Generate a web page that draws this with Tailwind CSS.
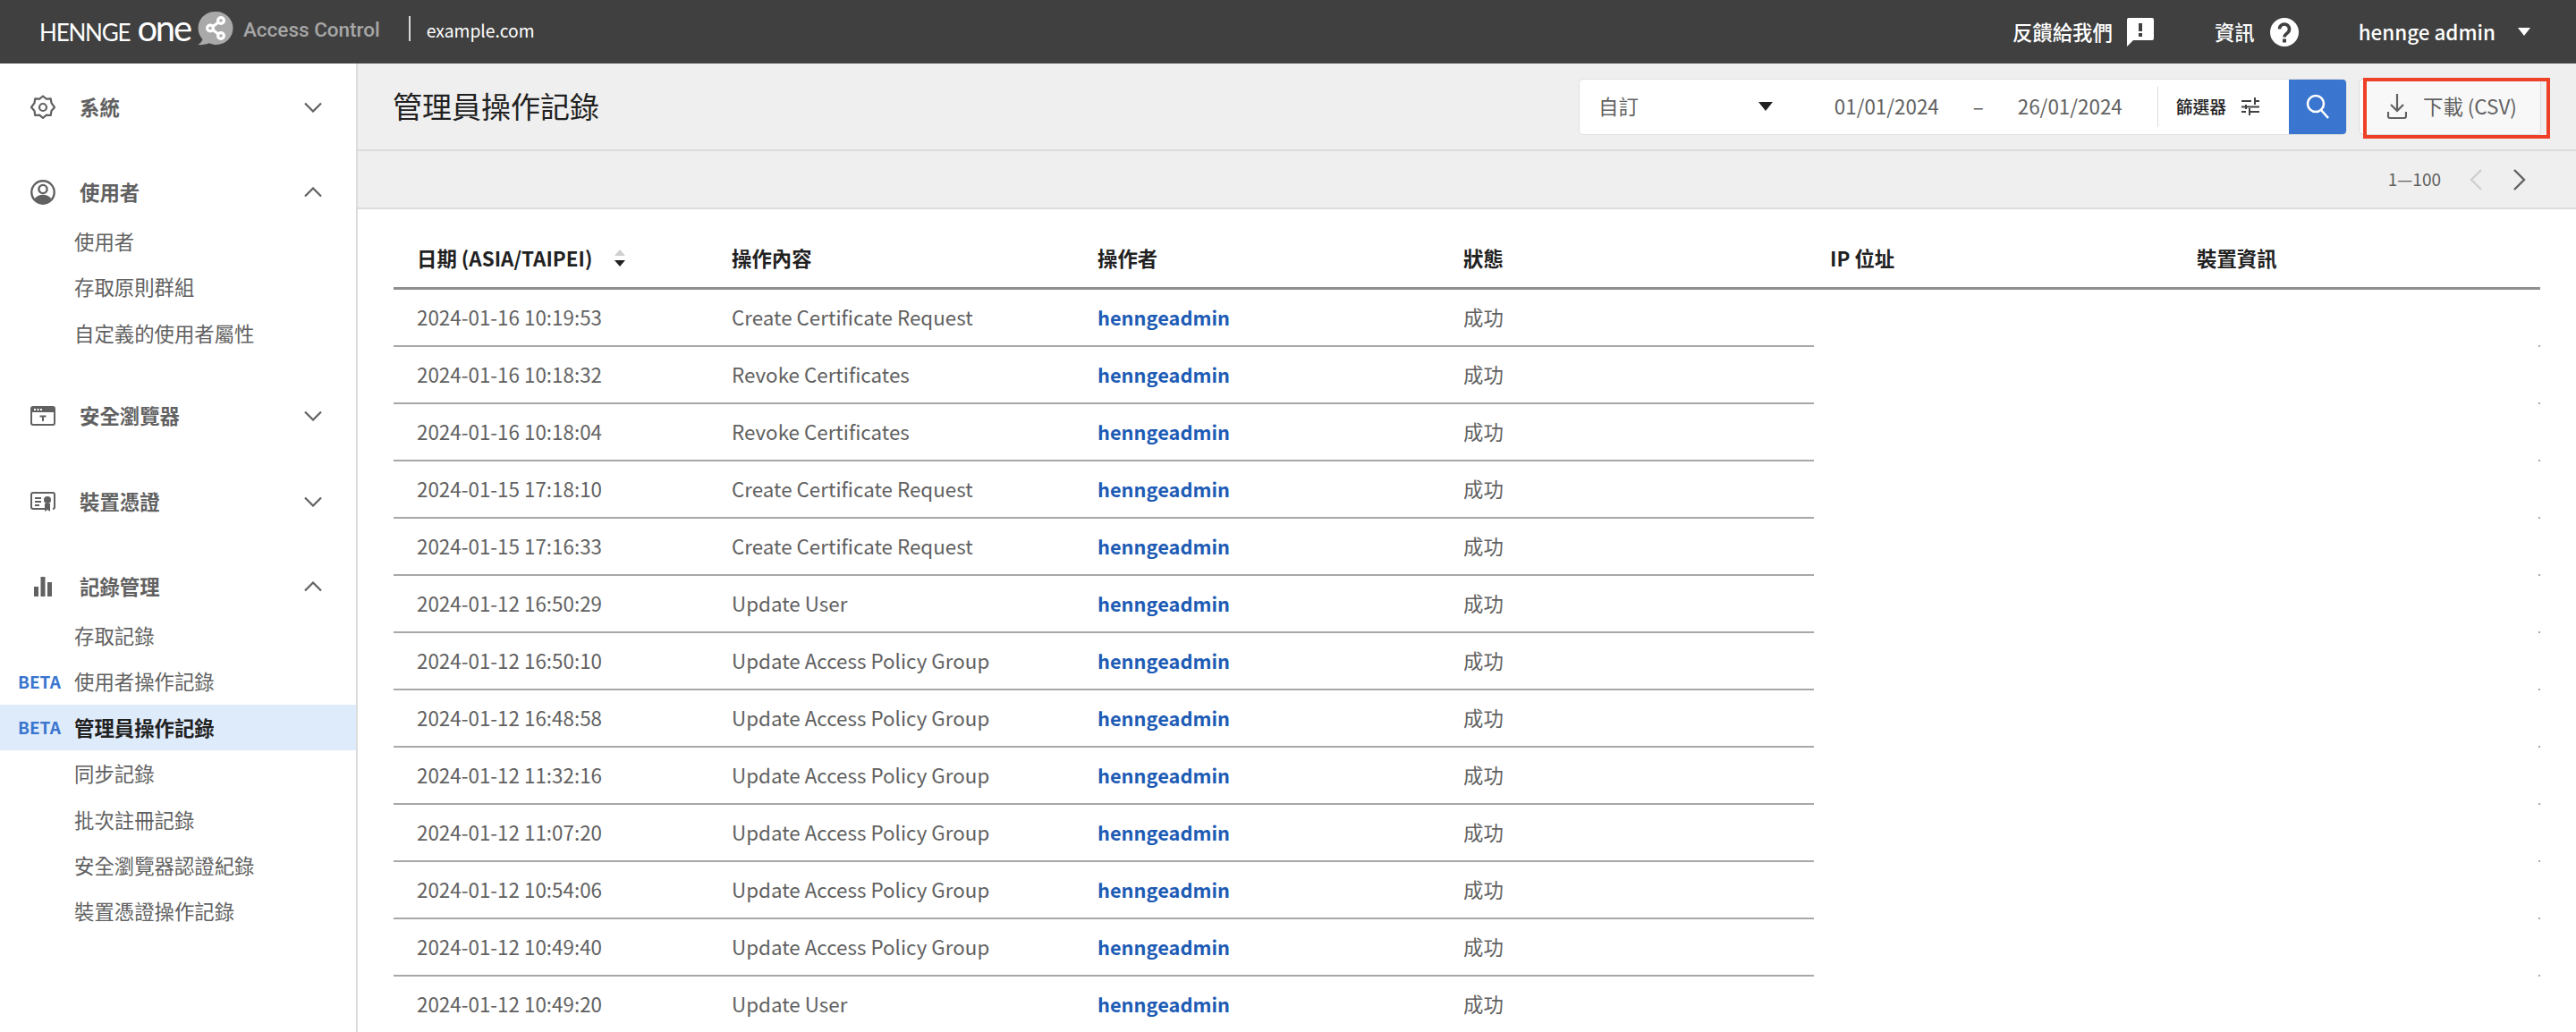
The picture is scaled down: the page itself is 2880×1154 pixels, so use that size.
<!DOCTYPE html>
<html lang="zh-Hant">
<head>
<meta charset="utf-8">
<title>管理員操作記錄</title>
<script src="https://cdn.jsdelivr.net/npm/@tailwindcss/browser@4"></script>
</head>
<body class="m-0 h-[1154px] w-[2880px] overflow-hidden bg-white font-['Noto_Sans_CJK_TC','Noto_Sans',sans-serif] text-[22.4px] text-[#616161]">
<header class="flex h-[71px] items-center bg-[#404040] pl-[44px] pr-[51px] text-white">
  <span class="mt-[-10px] flex items-baseline font-['Lato',sans-serif] leading-none"><span class="text-[26px] tracking-[-1.200px]">HENNGE</span><span class="ml-[8px] text-[40px] tracking-[-2.200px]">one</span></span>
  <svg class="ml-[8px] mt-[-7px] h-[40px] w-[40px]" viewBox="0 0 40 40"><path fill="#a9a9a9" d="M21 1a18.500 18.500 0 0 1 0 37c-3 0-5.500-.7-8-1.800C10 37.500 5 38.500 0 38c2.500-1.200 4.500-3 5.500-6A18.500 18.500 0 0 1 21 1Z"/><g fill="none" stroke="#fff" stroke-width="3.200"><circle cx="26" cy="11" r="3.400"/><circle cx="14" cy="19.500" r="3.400"/><circle cx="26" cy="28" r="3.400"/><path d="M17 17.500l6-4.300M17 21.500l6 4.500"/></g></svg>
  <span class="ml-[11px] mt-[-3px] font-['Roboto',sans-serif] text-[22.500px] font-medium text-[#a6a6a6]">Access Control</span>
  <span class="ml-[32px] mt-[-7px] h-[28px] w-[2px] bg-[#d9d9d9]"></span>
  <span class="ml-[18px] mt-[-3px] text-[19.300px]">example.com</span>
  <div class="ml-auto flex items-center font-medium">
    <span>反饋給我們</span>
    <svg class="ml-[16px] h-[34px] w-[30px]" viewBox="0 0 30 34"><path fill="#fff" fill-rule="evenodd" d="M2 1h26a2 2 0 0 1 2 2v21a2 2 0 0 1-2 2H7l-7 7V3a2 2 0 0 1 2-2Zm11 6v9h4V7Zm0 11v4h4v-4Z"/></svg>
    <span class="ml-[68px]">資訊</span>
    <svg class="ml-[17px] h-[32px] w-[32px]" viewBox="0 0 32 32"><circle cx="16" cy="16" r="16" fill="#fff"/><path fill="none" stroke="#404040" stroke-width="3.600" d="M10.500 12.500a5.500 5.500 0 1 1 8.800 4.400c-2 1.500-3.300 2.500-3.300 4.600"/><rect x="14" y="23.500" width="4" height="4" fill="#404040"/></svg>
    <span class="ml-[67px]">hennge admin</span>
    <svg class="ml-[25px] h-[9px] w-[14px]" viewBox="0 0 14 9"><path fill="#fff" d="M0 0h14L7 9Z"/></svg>
  </div>
</header>
<div class="flex h-[1083px]">
  <nav class="w-[400px] shrink-0 border-r-2 border-[#dcdcdc] pt-[20px]">
    <div class="flex h-[58px] items-center pl-[34px] pr-[38px] font-bold">
      <svg class="h-[28px] w-[28px]" viewBox="0 0 28 28" fill="none" stroke="#616161" stroke-width="2.200" stroke-linejoin="round"><path d="M14 1.500l3.800 3.200 4.900-.4.800 4.900L27 14l-3.500 3.900-.8 5.100-4.900-.4L14 26l-3.800-3.400-4.900.4-.8-5.100L1 14l3.500-4.800.8-4.900 4.900.4Z"/><circle cx="14" cy="14" r="4"/></svg>
      <span class="ml-[27px]">系統</span>
      <svg class="ml-auto h-[12px] w-[20px]" viewBox="0 0 20 12" fill="none" stroke="#616161" stroke-width="2.200"><path d="M1 1.500l9 9 9-9"/></svg>
    </div>
    <div class="mt-[37px] flex h-[58px] items-center pl-[34px] pr-[38px] font-bold">
      <svg class="h-[28px] w-[28px]" viewBox="0 0 28 28"><circle cx="14" cy="14" r="12.700" fill="none" stroke="#616161" stroke-width="2.400"/><circle cx="14" cy="10.500" r="4.600" fill="none" stroke="#616161" stroke-width="2.400"/><path fill="#616161" d="M4.500 21.500c2-3.300 5.500-4.800 9.500-4.800s7.500 1.500 9.500 4.800A12 12 0 0 1 14 26.500a12 12 0 0 1-9.500-5Z"/></svg>
      <span class="ml-[27px]">使用者</span>
      <svg class="ml-auto h-[12px] w-[20px]" viewBox="0 0 20 12" fill="none" stroke="#616161" stroke-width="2.200"><path d="M1 10.500l9-9 9 9"/></svg>
    </div>
    <ul>
      <li class="flex h-[51.400px] items-center pl-[83px]">使用者</li>
      <li class="flex h-[51.400px] items-center pl-[83px]">存取原則群組</li>
      <li class="flex h-[51.400px] items-center pl-[83px]">自定義的使用者屬性</li>
    </ul>
    <div class="mt-[38px] flex h-[58px] items-center pl-[34px] pr-[38px] font-bold">
      <svg class="h-[22px] w-[28px]" viewBox="0 0 28 22"><rect x="1" y="1" width="26" height="20" rx="2" fill="none" stroke="#616161" stroke-width="2"/><rect x="1" y="1" width="26" height="6" fill="#616161"/><path fill="#fff" d="M4 3h2v2H4zM7.500 3h2v2h-2zM11 3h2v2h-2z"/><path fill="#616161" d="M10.500 10.500h7v2h-2.500v4.500h-2v-4.500h-2.500z"/></svg>
      <span class="ml-[27px]">安全瀏覽器</span>
      <svg class="ml-auto h-[12px] w-[20px]" viewBox="0 0 20 12" fill="none" stroke="#616161" stroke-width="2.200"><path d="M1 1.500l9 9 9-9"/></svg>
    </div>
    <div class="mt-[38px] flex h-[58px] items-center pl-[34px] pr-[38px] font-bold">
      <svg class="h-[22px] w-[28px]" viewBox="0 0 28 22"><path fill="none" stroke="#616161" stroke-width="2" d="M16 19H3a2 2 0 0 1-2-2V3a2 2 0 0 1 2-2h22a2 2 0 0 1 2 2v14a2 2 0 0 1-2 2"/><path fill="#616161" d="M5 6h7v2H5zM5 10h7v2H5zM5 14h5v2H5z"/><circle cx="19" cy="9" r="4" fill="#616161"/><path fill="#616161" d="M16 13h6v9l-3-2-3 2Z"/></svg>
      <span class="ml-[27px]">裝置憑證</span>
      <svg class="ml-auto h-[12px] w-[20px]" viewBox="0 0 20 12" fill="none" stroke="#616161" stroke-width="2.200"><path d="M1 1.500l9 9 9-9"/></svg>
    </div>
    <div class="mt-[37px] flex h-[58px] items-center pl-[34px] pr-[38px] font-bold">
      <svg class="h-[22px] w-[28px]" viewBox="0 0 28 22"><path fill="#616161" d="M4 11h5v11H4zM11.500 0h5v22h-5zM19 6h5v16h-5z"/></svg>
      <span class="ml-[27px]">記錄管理</span>
      <svg class="ml-auto h-[12px] w-[20px]" viewBox="0 0 20 12" fill="none" stroke="#616161" stroke-width="2.200"><path d="M1 10.500l9-9 9 9"/></svg>
    </div>
    <ul>
      <li class="flex h-[51.400px] items-center pl-[83px]">存取記錄</li>
      <li class="flex h-[51.400px] items-center"><span class="w-[83px] pl-[20px] text-[19px] font-bold text-[#3a75cf]">BETA</span>使用者操作記錄</li>
      <li class="flex h-[51.400px] items-center bg-[#deebfb] font-bold text-[#212121]"><span class="w-[83px] pl-[20px] text-[19px] font-bold text-[#3a75cf]">BETA</span>管理員操作記錄</li>
      <li class="flex h-[51.400px] items-center pl-[83px]">同步記錄</li>
      <li class="flex h-[51.400px] items-center pl-[83px]">批次註冊記錄</li>
      <li class="flex h-[51.400px] items-center pl-[83px]">安全瀏覽器認證紀錄</li>
      <li class="flex h-[51.400px] items-center pl-[83px]">裝置憑證操作記錄</li>
    </ul>
  </nav>
  <main class="min-w-0 flex-1">
    <div class="relative flex h-[98px] items-center border-b-2 border-[#dcdcdc] bg-[#efefef] pl-[39px] pr-[39px]">
      <h1 class="text-[33px] font-normal text-[#212121]">管理員操作記錄</h1>
      <div class="ml-auto flex h-[63px] w-[859px] items-center overflow-hidden rounded-[5px] border border-[#e0e0e0] bg-white">
        <span class="ml-[21px]">自訂</span>
        <svg class="ml-[134px] h-[10px] w-[16px]" viewBox="0 0 16 10"><path fill="#212121" d="M0 0h16L8 10Z"/></svg>
        <span class="ml-[69px]">01/01/2024</span>
        <span class="ml-[38px]">–</span>
        <span class="ml-[38px]">26/01/2024</span>
        <span class="ml-[39px] h-[45px] w-[1px] bg-[#dcdcdc]"></span>
        <span class="ml-[20px] text-[18.800px] font-medium text-[#212121]">篩選器</span>
        <svg class="ml-[17px] h-[20px] w-[20px]" viewBox="0 0 20 20"><path fill="#424242" d="M0 3h11v2H0zM14 0h2v3h4v2h-4v3h-2zM0 15h5v2H0zM8 12h2v3h10v2H10v3H8zM4 8h2v1.500h14v2H6V13H4v-1.500H0v-2h4z"/></svg>
        <div class="ml-auto flex h-full w-[64px] items-center justify-center bg-[#3a75cf]">
          <svg class="h-[30px] w-[28px]" viewBox="0 0 28 30" fill="none" stroke="#fff" stroke-width="2.600"><circle cx="12" cy="12" r="9"/><path d="M18 19l8 9"/></svg>
        </div>
      </div>
      <button class="ml-[13px] flex h-[63px] w-[204px] items-center rounded-[5px] border border-[#dcdcdc] bg-[#f8f8f8] pl-[31px] text-[#616161]">
        <svg class="h-[30px] w-[22px]" viewBox="0 0 22 30" fill="none" stroke="#616161" stroke-width="2.200"><path d="M11 1v19M4 13l7 7 7-7M1 21v5a2 2 0 0 0 2 2h16a2 2 0 0 0 2-2v-5"/></svg>
        <span class="ml-[18px]">下載 (CSV)</span>
      </button>
      <span class="absolute left-[2242px] top-[16px] h-[68px] w-[209px] border-[4px] border-[#ee4027]"></span>
    </div>
    <div class="flex h-[65px] items-center justify-end border-b-2 border-[#dcdcdc] bg-[#efefef] pr-[56px]">
      <span class="text-[19px]">1—100</span>
      <svg class="ml-[32px] h-[24px] w-[14px]" viewBox="0 0 14 24" fill="none" stroke="#cfcfcf" stroke-width="2.400"><path d="M13 1L2 12l11 11"/></svg>
      <svg class="ml-[35px] h-[24px] w-[14px]" viewBox="0 0 14 24" fill="none" stroke="#616161" stroke-width="2.400"><path d="M1 1l11 11L1 23"/></svg>
    </div>
    <div class="px-[40px]">
      <div class="grid h-[90px] grid-cols-[352px_409px_409px_410px_410px_384px] items-center border-b-[3px] border-[#8f8f8f] pl-[26px] pt-[23px] font-bold text-[#212121]">
        <div class="flex items-center">日期 (ASIA/TAIPEI)
          <svg class="ml-[25px] h-[20px] w-[12px]" viewBox="0 0 12 20"><path fill="#cfcfcf" d="M6 0l6 7H0Z"/><path fill="#212121" d="M0 12h12l-6 7Z"/></svg>
        </div>
        <div>操作內容</div><div>操作者</div><div>狀態</div><div>IP 位址</div><div>裝置資訊</div>
      </div>
      <div class="grid h-[64px] grid-cols-[351px_409px_409px_419px_1fr_2px]"><div class="flex items-center border-b-2 border-[#a8a8a8] pl-[26px]">2024-01-16 10:19:53</div><div class="flex items-center border-b-2 border-[#a8a8a8] pl-[27px]">Create Certificate Request</div><div class="flex items-center border-b-2 border-[#a8a8a8] pl-[27px] text-[21.800px] font-bold text-[#1d5bb5]">henngeadmin</div><div class="flex items-center border-b-2 border-[#a8a8a8] pl-[27px]">成功</div><div></div><div class="border-b-2 border-[#a8a8a8]"></div></div>
      <div class="grid h-[64px] grid-cols-[351px_409px_409px_419px_1fr_2px]"><div class="flex items-center border-b-2 border-[#a8a8a8] pl-[26px]">2024-01-16 10:18:32</div><div class="flex items-center border-b-2 border-[#a8a8a8] pl-[27px]">Revoke Certificates</div><div class="flex items-center border-b-2 border-[#a8a8a8] pl-[27px] text-[21.800px] font-bold text-[#1d5bb5]">henngeadmin</div><div class="flex items-center border-b-2 border-[#a8a8a8] pl-[27px]">成功</div><div></div><div class="border-b-2 border-[#a8a8a8]"></div></div>
      <div class="grid h-[64px] grid-cols-[351px_409px_409px_419px_1fr_2px]"><div class="flex items-center border-b-2 border-[#a8a8a8] pl-[26px]">2024-01-16 10:18:04</div><div class="flex items-center border-b-2 border-[#a8a8a8] pl-[27px]">Revoke Certificates</div><div class="flex items-center border-b-2 border-[#a8a8a8] pl-[27px] text-[21.800px] font-bold text-[#1d5bb5]">henngeadmin</div><div class="flex items-center border-b-2 border-[#a8a8a8] pl-[27px]">成功</div><div></div><div class="border-b-2 border-[#a8a8a8]"></div></div>
      <div class="grid h-[64px] grid-cols-[351px_409px_409px_419px_1fr_2px]"><div class="flex items-center border-b-2 border-[#a8a8a8] pl-[26px]">2024-01-15 17:18:10</div><div class="flex items-center border-b-2 border-[#a8a8a8] pl-[27px]">Create Certificate Request</div><div class="flex items-center border-b-2 border-[#a8a8a8] pl-[27px] text-[21.800px] font-bold text-[#1d5bb5]">henngeadmin</div><div class="flex items-center border-b-2 border-[#a8a8a8] pl-[27px]">成功</div><div></div><div class="border-b-2 border-[#a8a8a8]"></div></div>
      <div class="grid h-[64px] grid-cols-[351px_409px_409px_419px_1fr_2px]"><div class="flex items-center border-b-2 border-[#a8a8a8] pl-[26px]">2024-01-15 17:16:33</div><div class="flex items-center border-b-2 border-[#a8a8a8] pl-[27px]">Create Certificate Request</div><div class="flex items-center border-b-2 border-[#a8a8a8] pl-[27px] text-[21.800px] font-bold text-[#1d5bb5]">henngeadmin</div><div class="flex items-center border-b-2 border-[#a8a8a8] pl-[27px]">成功</div><div></div><div class="border-b-2 border-[#a8a8a8]"></div></div>
      <div class="grid h-[64px] grid-cols-[351px_409px_409px_419px_1fr_2px]"><div class="flex items-center border-b-2 border-[#a8a8a8] pl-[26px]">2024-01-12 16:50:29</div><div class="flex items-center border-b-2 border-[#a8a8a8] pl-[27px]">Update User</div><div class="flex items-center border-b-2 border-[#a8a8a8] pl-[27px] text-[21.800px] font-bold text-[#1d5bb5]">henngeadmin</div><div class="flex items-center border-b-2 border-[#a8a8a8] pl-[27px]">成功</div><div></div><div class="border-b-2 border-[#a8a8a8]"></div></div>
      <div class="grid h-[64px] grid-cols-[351px_409px_409px_419px_1fr_2px]"><div class="flex items-center border-b-2 border-[#a8a8a8] pl-[26px]">2024-01-12 16:50:10</div><div class="flex items-center border-b-2 border-[#a8a8a8] pl-[27px]">Update Access Policy Group</div><div class="flex items-center border-b-2 border-[#a8a8a8] pl-[27px] text-[21.800px] font-bold text-[#1d5bb5]">henngeadmin</div><div class="flex items-center border-b-2 border-[#a8a8a8] pl-[27px]">成功</div><div></div><div class="border-b-2 border-[#a8a8a8]"></div></div>
      <div class="grid h-[64px] grid-cols-[351px_409px_409px_419px_1fr_2px]"><div class="flex items-center border-b-2 border-[#a8a8a8] pl-[26px]">2024-01-12 16:48:58</div><div class="flex items-center border-b-2 border-[#a8a8a8] pl-[27px]">Update Access Policy Group</div><div class="flex items-center border-b-2 border-[#a8a8a8] pl-[27px] text-[21.800px] font-bold text-[#1d5bb5]">henngeadmin</div><div class="flex items-center border-b-2 border-[#a8a8a8] pl-[27px]">成功</div><div></div><div class="border-b-2 border-[#a8a8a8]"></div></div>
      <div class="grid h-[64px] grid-cols-[351px_409px_409px_419px_1fr_2px]"><div class="flex items-center border-b-2 border-[#a8a8a8] pl-[26px]">2024-01-12 11:32:16</div><div class="flex items-center border-b-2 border-[#a8a8a8] pl-[27px]">Update Access Policy Group</div><div class="flex items-center border-b-2 border-[#a8a8a8] pl-[27px] text-[21.800px] font-bold text-[#1d5bb5]">henngeadmin</div><div class="flex items-center border-b-2 border-[#a8a8a8] pl-[27px]">成功</div><div></div><div class="border-b-2 border-[#a8a8a8]"></div></div>
      <div class="grid h-[64px] grid-cols-[351px_409px_409px_419px_1fr_2px]"><div class="flex items-center border-b-2 border-[#a8a8a8] pl-[26px]">2024-01-12 11:07:20</div><div class="flex items-center border-b-2 border-[#a8a8a8] pl-[27px]">Update Access Policy Group</div><div class="flex items-center border-b-2 border-[#a8a8a8] pl-[27px] text-[21.800px] font-bold text-[#1d5bb5]">henngeadmin</div><div class="flex items-center border-b-2 border-[#a8a8a8] pl-[27px]">成功</div><div></div><div class="border-b-2 border-[#a8a8a8]"></div></div>
      <div class="grid h-[64px] grid-cols-[351px_409px_409px_419px_1fr_2px]"><div class="flex items-center border-b-2 border-[#a8a8a8] pl-[26px]">2024-01-12 10:54:06</div><div class="flex items-center border-b-2 border-[#a8a8a8] pl-[27px]">Update Access Policy Group</div><div class="flex items-center border-b-2 border-[#a8a8a8] pl-[27px] text-[21.800px] font-bold text-[#1d5bb5]">henngeadmin</div><div class="flex items-center border-b-2 border-[#a8a8a8] pl-[27px]">成功</div><div></div><div class="border-b-2 border-[#a8a8a8]"></div></div>
      <div class="grid h-[64px] grid-cols-[351px_409px_409px_419px_1fr_2px]"><div class="flex items-center border-b-2 border-[#a8a8a8] pl-[26px]">2024-01-12 10:49:40</div><div class="flex items-center border-b-2 border-[#a8a8a8] pl-[27px]">Update Access Policy Group</div><div class="flex items-center border-b-2 border-[#a8a8a8] pl-[27px] text-[21.800px] font-bold text-[#1d5bb5]">henngeadmin</div><div class="flex items-center border-b-2 border-[#a8a8a8] pl-[27px]">成功</div><div></div><div class="border-b-2 border-[#a8a8a8]"></div></div>
      <div class="grid h-[64px] grid-cols-[351px_409px_409px_419px_1fr_2px]"><div class="flex items-center border-b-2 border-[#a8a8a8] pl-[26px]">2024-01-12 10:49:20</div><div class="flex items-center border-b-2 border-[#a8a8a8] pl-[27px]">Update User</div><div class="flex items-center border-b-2 border-[#a8a8a8] pl-[27px] text-[21.800px] font-bold text-[#1d5bb5]">henngeadmin</div><div class="flex items-center border-b-2 border-[#a8a8a8] pl-[27px]">成功</div><div></div><div class="border-b-2 border-[#a8a8a8]"></div></div>
    </div>
  </main>
</div>
</body>
</html>
